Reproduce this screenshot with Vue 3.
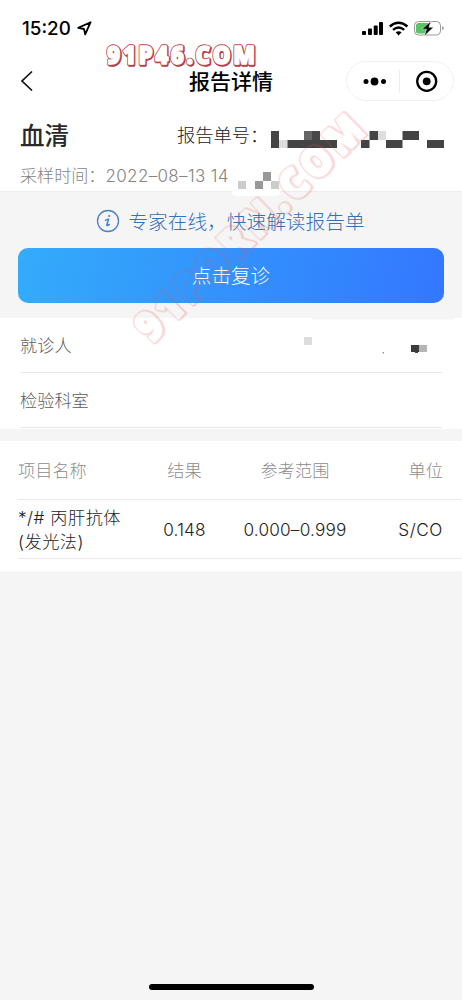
<script setup>
const numberBlocks = [
  [271, 131, 8, 17, '#444'], [279, 140, 8.5, 8, '#ddd'], [287.5, 140, 49.5, 8, '#444'],
  [304, 131, 8, 9, '#666'], [312, 131, 8, 9, '#484848'], [361, 140, 8.5, 8, '#444'],
  [369.5, 131, 8.5, 9, '#444'], [378, 131, 8, 9, '#ddd'], [386, 140, 16.5, 8, '#444'],
  [402.5, 131, 16.5, 9, '#444'], [427, 140, 17, 8, '#444'],
  [238, 181, 8, 8, '#ccc'], [255, 181, 8, 8, '#999'], [263, 172, 8, 9, '#999'], [271, 181, 8, 8, '#ccc'],
  [304, 337, 8, 8, '#ddd'], [411, 345, 8, 7, '#3c3c3c'], [419, 345, 8, 7, '#b5b5b5'],
  [415, 352, 3, 1, '#444'], [382.5, 352, 1.5, 1.5, '#999'],
]
const fields = ['就诊人', '检验科室']
</script>

<template>
  <main class="screen">
    <header class="status">
      <div class="clock">
        <span>15:20</span>
        <svg width="15" height="15" viewBox="0 0 15 15"><path d="M1.2 6.9 13.6 1.2 8.2 13.4 7 8Z" fill="none" stroke="#000" stroke-width="1.8" stroke-linejoin="round" /></svg>
      </div>
      <svg class="signals" width="84" height="18" viewBox="0 0 84 18">
        <rect x="1" y="11" width="4" height="4" rx="1" /><rect x="7" y="8.5" width="4" height="6.500" rx="1" />
        <rect x="12.7" y="5.500" width="4" height="9.500" rx="1" /><rect x="18" y="2" width="4" height="13" rx="1" />
        <g fill="none" stroke="#000" stroke-width="2.4"><path d="M28.8 6.500Q37.600-1 46.400 6.500" /><path d="M32 9.900Q37.600 5.300 43.200 9.900" /></g>
        <path d="M34.600 12.300Q37.600 10 40.600 12.300L37.600 15.400Z" />
        <rect x="53.500" y="1.500" width="26" height="13.500" rx="4" fill="none" stroke="#999" />
        <path d="M57.500 3H67v10.500H57.500Q55 13.500 55 11V5.500Q55 3 57.500 3Z" fill="#57c466" />
        <path d="M81.200 6v4.500q1.500-.8 1.500-2.250T81.200 6" fill="#999" />
        <path d="M70 1 61 9.200h4.600L63.300 16 72.500 7.300h-4.600Z" stroke="#fff" stroke-width=".5" />
      </svg>
    </header>

    <nav class="nav">
      <svg class="back" width="14" height="22" viewBox="0 0 14 22"><path d="M12 1.500 2 11l10 9.500" fill="none" stroke="#111" stroke-width="1.700" /></svg>
      <h1>报告详情</h1>
      <div class="capsule">
        <svg width="106" height="38" viewBox="0 0 106 38">
          <circle cx="19" cy="19.500" r="2.500" /><circle cx="27.500" cy="19.500" r="3.900" /><circle cx="36.500" cy="19.500" r="2.500" />
          <path d="M52.500 8v23" stroke="#ededed" /><circle cx="79.700" cy="19.300" r="9.500" fill="none" stroke="#000" stroke-width="2.300" /><circle cx="79.700" cy="19.300" r="3.900" />
        </svg>
      </div>
    </nav>

    <section class="summary">
      <div class="summary-top"><h2>血清</h2><span class="number">报告单号：</span></div>
      <p class="sample">采样时间：<span>2022–08–13 14</span></p>
    </section>

    <section class="banner">
      <div class="tip">
        <svg width="24" height="24" viewBox="0 0 24 24"><circle cx="12" cy="12" r="10.500" fill="none" stroke="#4a82c0" stroke-width="1.300" /><circle cx="13.200" cy="7" r="1.100" fill="#4a82c0" /><path d="M9 11.800q2-1.700 3.500-1.500L10.800 16q-.2 1.300 3-.9" fill="none" stroke="#4a82c0" stroke-width="1.500" /></svg>
        <span>专家在线，快速解读报告单</span>
      </div>
      <button>点击复诊</button>
    </section>

    <section class="fields">
      <div v-for="f in fields" :key="f" class="field">{{ f }}</div>
    </section>

    <section class="results">
      <div class="row head"><span>项目名称</span><span class="mid">结果</span><span class="mid">参考范围</span><span class="end">单位</span></div>
      <div class="row data"><span class="name">*/# 丙肝抗体<br>(发光法)</span><span class="mid">0.148</span><span class="mid">0.000–0.999</span><span class="end">S/CO</span></div>
    </section>

    <div class="home"></div>

    <svg class="overlay" width="462" height="1000" viewBox="0 0 462 1000">
      <defs>
        <filter id="hollow" x="-10%" y="-40%" width="120%" height="180%">
          <feMorphology in="SourceAlpha" operator="dilate" radius="1" result="outer" />
          <feOffset in="outer" dx="0.7" dy="0.7" result="shade" />
          <feMerge result="both"><feMergeNode in="outer" /><feMergeNode in="shade" /></feMerge>
          <feComposite in="both" in2="SourceAlpha" operator="out" result="edge" />
          <feFlood flood-color="#e85050" />
          <feComposite in2="edge" operator="in" />
        </filter>
      </defs>
      <rect x="232" y="187" width="48" height="9" rx="4" fill="#fff" />
      <rect v-for="(b, i) in numberBlocks" :key="i" :x="b[0]" :y="b[1]" :width="b[2]" :height="b[3]" :fill="b[4]" />
      <path d="M312 318.500h142" stroke="#f5f5f5" stroke-width="2" />
      <g class="mark" opacity=".24" transform="translate(152 344) rotate(-44.500) scale(.86 1)">
        <g filter="url(#hollow)"><text x="0" y="0" font-size="43" stroke="#000" stroke-width="2.500" textLength="350">91PORN.COM</text></g>
      </g>
      <g class="mark" transform="translate(107 63.500) scale(.88 1)">
        <text x="1" y="1" font-size="25.500" textLength="168" fill="#ad3d48" stroke="#ad3d48" stroke-width="3.400">91P46.COM</text>
        <text x="0" y="0" font-size="25.500" textLength="168" fill="#c34650" stroke="#c34650" stroke-width="3.400">91P46.COM</text>
        <text x="0" y="0" font-size="25.500" textLength="168" fill="#fff" stroke="#fff" stroke-width="1.600">91P46.COM</text>
      </g>
    </svg>
  </main>
</template>

<style>
body { background: #f5f5f5; }
</style>
<style scoped>
* { box-sizing: border-box; }
.screen { position: relative; width: 462px; height: 1000px; overflow: hidden; background: #f5f5f5; font-family: "Inter", "Noto Sans CJK SC", sans-serif; color: #444; }
h1, h2, p { margin: 0; }
.status { height: 56px; background: #fff; display: flex; justify-content: space-between; padding: 18px 17px 0 22px; }
.clock { display: flex; gap: 6px; height: 20px; align-items: center; font-size: 18.800px; font-weight: 500; color: #000; }
.signals { margin-top: 2px; }
.nav { height: 54px; background: #fff; display: grid; grid-template-columns: 108px 1fr 108px; align-items: center; padding: 0 8px 4px; }
.back { margin-left: 12px; }
h1 { text-align: center; font-size: 21px; line-height: 30px; padding-top: 2px; font-weight: 500; color: #000; }
.capsule { width: 108px; height: 40px; border: 1px solid #f1f1f1; border-radius: 20px; }
.capsule svg { display: block; }
.summary { height: 82px; background: #fff; padding: 10px 20px 0; border-bottom: 1px solid #ececec; }
.summary-top { display: flex; height: 32px; align-items: center; }
h2 { width: 157px; font-size: 24.500px; line-height: 32px; font-weight: 500; color: #292929; }
.number { font-size: 18.300px; line-height: 26px; padding-bottom: 2px; font-weight: 300; color: #222; }
.sample { font-size: 17.100px; line-height: 24px; margin-top: 12px; color: #858585; font-weight: 300; white-space: nowrap; }
.sample span { font-size: 17px; letter-spacing: .35px; }
.banner { height: 126px; padding: 14px 18px 0; }
.tip { display: flex; justify-content: center; align-items: center; gap: 8px; height: 30px; margin-left: -1px; font-size: 19.700px; font-weight: 300; color: #3472b8; }
.tip span { position: relative; top: -1px; }
button { display: block; width: 426px; height: 55px; margin-top: 12px; padding: 0 0 2px; border: 0; border-radius: 10px; background: linear-gradient(100deg, #33acfa, #3377ff); color: #fff; font-family: inherit; font-size: 19.600px; font-weight: 300; }
.fields { background: #fff; height: 111px; padding: 0 20px; }
.field { height: 55px; line-height: 56px; font-size: 17.200px; font-weight: 300; border-bottom: 1px solid #e8e8e8; color: #5c5c5c; }
.results { margin-top: 12px; background: #fff; height: 130px; padding-left: 18px; }
.row { display: grid; grid-template-columns: 116px 101px 120px 88px; align-items: center; border-bottom: 1px solid #eaeaea; font-size: 17.200px; font-weight: 300; }
.head { height: 59px; color: #8c8c8c; padding-bottom: 2px; }
.data { height: 59px; color: #222; line-height: 24px; letter-spacing: .2px; padding-top: 1px; }
.name { white-space: nowrap; letter-spacing: .5px; }
.mid { text-align: center; }
.end { text-align: right; }
.data .end { letter-spacing: .6px; }
.home { position: absolute; left: 149px; top: 984px; width: 165px; height: 6px; border-radius: 3px; background: #000; }
.overlay { position: absolute; inset: 0; pointer-events: none; }
.mark { font-family: "Open Sans", sans-serif; font-weight: 800; stroke-linejoin: round; }
</style>
